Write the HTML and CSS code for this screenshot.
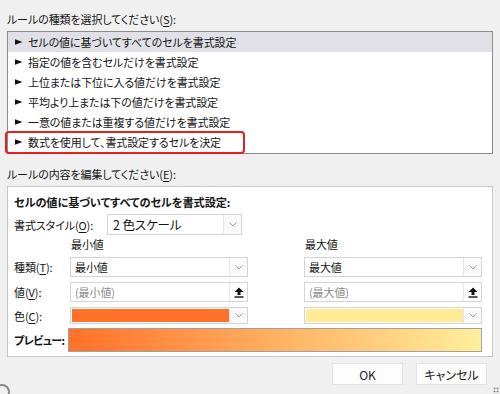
FILE: index.html
```html
<!DOCTYPE html>
<html lang="ja">
<head>
<meta charset="utf-8">
<link rel="stylesheet" href="styles.css">
</head>
<body>
<div class="dialog">
  <div class="section-label">ルールの種類を選択してください(<u>S</u>):</div>
  <div class="rule-list">
    <div class="rule selected"><svg class="ptr" width="8" height="6" viewBox="0 0 8 6"><path d="M0 0.3 L7.5 3 L0 5.7 Z" fill="#111"/></svg>セルの値に基づいてすべてのセルを書式設定</div>
    <div class="rule"><svg class="ptr" width="8" height="6" viewBox="0 0 8 6"><path d="M0 0.3 L7.5 3 L0 5.7 Z" fill="#111"/></svg>指定の値を含むセルだけを書式設定</div>
    <div class="rule"><svg class="ptr" width="8" height="6" viewBox="0 0 8 6"><path d="M0 0.3 L7.5 3 L0 5.7 Z" fill="#111"/></svg>上位または下位に入る値だけを書式設定</div>
    <div class="rule"><svg class="ptr" width="8" height="6" viewBox="0 0 8 6"><path d="M0 0.3 L7.5 3 L0 5.7 Z" fill="#111"/></svg>平均より上または下の値だけを書式設定</div>
    <div class="rule"><svg class="ptr" width="8" height="6" viewBox="0 0 8 6"><path d="M0 0.3 L7.5 3 L0 5.7 Z" fill="#111"/></svg>一意の値または重複する値だけを書式設定</div>
    <div class="rule marked"><svg class="ptr" width="8" height="6" viewBox="0 0 8 6"><path d="M0 0.3 L7.5 3 L0 5.7 Z" fill="#111"/></svg>数式を使用して、書式設定するセルを決定<span class="highlight-box"></span></div>
  </div>

  <div class="section-label second">ルールの内容を編集してください(<u>E</u>):</div>
  <div class="edit-box">
    <div class="heading">セルの値に基づいてすべてのセルを書式設定:</div>
    <div class="style-row">
      <span class="lbl">書式スタイル(<u>O</u>):</span>
      <div class="combo style-combo"><span class="combo-text">2 色スケール</span><span class="drop"><svg width="8" height="5" viewBox="0 0 8 5"><path d="M0.5 0.5 L4 4 L7.5 0.5" fill="none" stroke="#9a9a9a" stroke-width="1"/></svg></span></div>
    </div>
    <div class="grid">
      <span></span>
      <span class="col-head">最小値</span>
      <span></span>
      <span class="col-head">最大値</span>

      <span class="lbl">種類(<u>T</u>):</span>
      <div class="combo"><span class="combo-text">最小値</span><span class="drop"><svg width="8" height="5" viewBox="0 0 8 5"><path d="M0.5 0.5 L4 4 L7.5 0.5" fill="none" stroke="#9a9a9a" stroke-width="1"/></svg></span></div>
      <span></span>
      <div class="combo"><span class="combo-text">最大値</span><span class="drop"><svg width="8" height="5" viewBox="0 0 8 5"><path d="M0.5 0.5 L4 4 L7.5 0.5" fill="none" stroke="#9a9a9a" stroke-width="1"/></svg></span></div>

      <span class="lbl">値(<u>V</u>):</span>
      <div class="combo input"><span class="combo-text placeholder">(最小値)</span><span class="btn"><svg width="10" height="11" viewBox="0 0 10 11"><path d="M5 0.5 L9.5 5 L6.5 5 L6.5 8 L3.5 8 L3.5 5 L0.5 5 Z" fill="#111"/><rect x="0.5" y="9.3" width="9" height="1.4" fill="#111"/></svg></span></div>
      <span></span>
      <div class="combo input"><span class="combo-text placeholder">(最大値)</span><span class="btn"><svg width="10" height="11" viewBox="0 0 10 11"><path d="M5 0.5 L9.5 5 L6.5 5 L6.5 8 L3.5 8 L3.5 5 L0.5 5 Z" fill="#111"/><rect x="0.5" y="9.3" width="9" height="1.4" fill="#111"/></svg></span></div>

      <span class="lbl">色(<u>C</u>):</span>
      <div class="combo color"><span class="swatch min"></span><span class="drop"><svg width="8" height="5" viewBox="0 0 8 5"><path d="M0.5 0.5 L4 4 L7.5 0.5" fill="none" stroke="#9a9a9a" stroke-width="1"/></svg></span></div>
      <span></span>
      <div class="combo color"><span class="swatch max"></span><span class="drop"><svg width="8" height="5" viewBox="0 0 8 5"><path d="M0.5 0.5 L4 4 L7.5 0.5" fill="none" stroke="#9a9a9a" stroke-width="1"/></svg></span></div>
    </div>
    <div class="preview-row">
      <span class="lbl preview-lbl">プレビュー:</span>
      <div class="preview"></div>
    </div>
  </div>

  <div class="buttons">
    <button class="btn-ok">OK</button>
    <button class="btn-cancel">キャンセル</button>
  </div>
</div>
<span class="corner"></span>
<span class="grip"></span>
</body>
</html>
```

FILE: styles.css
```css
html, body {
  margin: 0;
  padding: 0;
  width: 500px;
  height: 394px;
  overflow: hidden;
  background: #f0f0f0;
}
body {
  font-family: "Noto Sans CJK JP", "Noto Sans", sans-serif;
  font-size: 11px;
  letter-spacing: -0.1px;
  color: #141414;
  font-feature-settings: "palt";
  position: relative;
}
u { text-decoration: underline; text-underline-offset: 2px; }
.dialog {
  padding: 11px 7px 0 7px;
}
.section-label {
  height: 17px;
  line-height: 17px;
  margin-bottom: 3px;
}
.section-label.second {
  margin-top: 12px;
}
.rule-list {
  position: relative;
  background: #fff;
  border: 1px solid #8c8c8c;
  height: 121px;
}
.rule {
  position: relative;
  display: flex;
  align-items: center;
  height: 20px;
  padding-left: 7px;
  white-space: nowrap;
}
.rule.selected {
  background: #e0e0e6;
}
.ptr {
  margin-right: 5px;
  flex: none;
}
.highlight-box {
  position: absolute;
  left: -3px;
  top: -1px;
  width: 236px;
  height: 19px;
  border: 2px solid #e3211c;
  border-radius: 4px;
}
.edit-box {
  background: #fff;
  border: 1px solid #c8c8c8;
  height: 171px;
  box-sizing: border-box;
  padding: 7px 10px 0 6px;
}
.heading {
  font-weight: bold;
  height: 17px;
  line-height: 17px;
  font-size: 11.2px;
}
.style-row {
  display: flex;
  align-items: center;
  margin-top: 3px;
  height: 21px;
}
.lbl {
  white-space: nowrap;
}
.style-row .lbl {
  width: 93px;
}
.combo {
  display: flex;
  align-items: stretch;
  border: 1px solid #d4d4d4;
  background: #fff;
  box-sizing: border-box;
}
.style-combo {
  width: 135px;
  height: 21px;
}
.combo-text {
  flex: 1;
  display: flex;
  align-items: center;
  padding-left: 4px;
  white-space: nowrap;
}
.style-combo .combo-text {
  font-size: 12.5px;
  padding-left: 5px;
}
.placeholder {
  color: #8a8a8a;
}
.drop, .btn {
  width: 17px;
  display: flex;
  align-items: center;
  justify-content: center;
  border-left: 1px solid #e6e6e6;
  background: #fafafa;
}
.btn {
  background: #fff;
}
.grid {
  display: grid;
  grid-template-columns: 56px 178px 56px 178px;
  grid-template-rows: 17px 20px 20px 17px;
  row-gap: 5px;
  align-items: center;
}
.grid .combo { align-self: stretch; }
.col-head {
  padding-left: 1px;
}
.combo.color {
  padding: 1px 0 1px 1px;
}
.swatch {
  flex: 1;
}
.swatch.min { background: #ff7128; }
.swatch.max { background: #ffeb94; }
.combo.color .drop { margin: -1px 0; }
.preview-row {
  display: flex;
  align-items: center;
  margin-top: 4px;
  height: 24px;
}
.preview-lbl {
  flex: none;
  width: 54px;
  font-weight: bold;
  letter-spacing: -0.6px;
  overflow: hidden;
}
.preview {
  flex: none;
  width: 414px;
  height: 24px;
  box-sizing: border-box;
  border: 1px solid #a0a0a0;
  background: linear-gradient(to right, #ff7128, #ffef9c);
}
.buttons {
  display: flex;
  justify-content: flex-end;
  gap: 13px;
  padding-right: 6px;
  margin-top: 6px;
}
.buttons button {
  width: 71px;
  height: 22px;
  border: 1px solid #e3e3e3;
  background: #fdfdfd;
  font-family: "Noto Sans CJK JP", "Noto Sans", sans-serif;
  font-size: 12px;
  color: #1a1a1a;
  padding: 0;
  font-feature-settings: "palt";
}
.corner {
  position: absolute;
  left: -6px;
  bottom: -6px;
  width: 12px;
  height: 12px;
  border-radius: 50%;
  border: 2px solid #8a8a8a;
}
.grip {
  position: absolute;
  right: 1px;
  bottom: 1px;
  width: 6px;
  height: 6px;
  background: radial-gradient(circle, #888 0.8px, transparent 1.2px) 0 0 / 3px 3px;
}
```
